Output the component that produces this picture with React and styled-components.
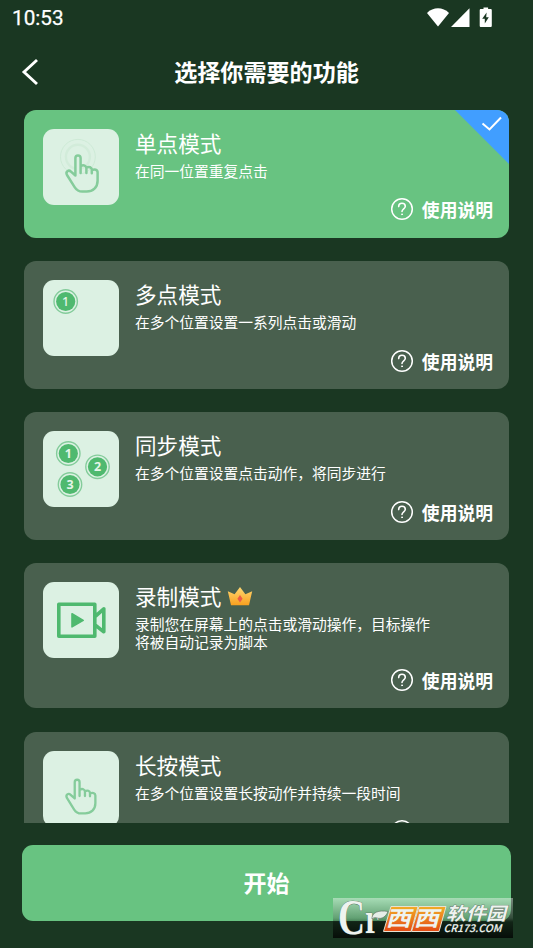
import React from 'react';
import styled, { createGlobalStyle } from 'styled-components';

const MODES = [
  { title: '单点模式', desc: '在同一位置重复点击', icon: 'tap', active: true },
  { title: '多点模式', desc: '在多个位置设置一系列点击或滑动', icon: 'multi' },
  { title: '同步模式', desc: '在多个位置设置点击动作，将同步进行', icon: 'sync' },
  { title: '录制模式', desc: '录制您在屏幕上的点击或滑动操作，目标操作将被自动记录为脚本', icon: 'record', vip: true },
  { title: '长按模式', desc: '在多个位置设置长按动作并持续一段时间', icon: 'press' },
];

const Hand = () => (
  <path
    d="M32.4 46.5V29a2.6 2.6 0 0 1 5.2 0V44M37.6 37.2c3-1.8 5.8-.6 5.8 2.2v4.6M43.4 38.8c2.6-1.6 5.4-.6 5.4 2v3.4M48.8 41.2c2.6-1.2 5.8-.6 5.8 2.2v8.4c0 6.6-4.6 10.8-11 10.8h-4.4c-3.600 0-5.600-1.400-7.400-4.200l-7.800-12.400c-1.800-3.400 1.600-5.600 4-3.400l4.400 3.900"
    fill="none"
    stroke="#85cc9b"
    strokeWidth="2.5"
    strokeLinecap="round"
    strokeLinejoin="round"
  />
);

const Point = ({ x, y, n, bold }) => (
  <g>
    <circle cx={x} cy={y} r="11.7" fill="none" stroke="#84cc9b" strokeWidth="1.4" />
    <circle cx={x} cy={y} r="9.6" fill="#4fb96f" />
    <PointText x={x} y={y + 4.4} $bold={bold}>{n}</PointText>
  </g>
);

const ModeIcon = ({ type }) => (
  <Tile viewBox="0 0 76 76">
    {type === 'tap' && (
      <>
        <circle cx="34.9" cy="27.8" r="17.4" fill="none" stroke="#cdead6" strokeWidth="1" />
        <circle cx="34.9" cy="27.8" r="12" fill="none" stroke="#d2ecda" strokeWidth="2.4" />
        <rect x="32.4" y="29" width="5.2" height="18" fill="#dcf1e3" />
        <Hand />
      </>
    )}
    {type === 'multi' && <Point x={22.7} y={21.5} n="1" />}
    {type === 'sync' && (
      <>
        <Point x={25.3} y={22.5} n="1" bold />
        <Point x={54.5} y={35.8} n="2" bold />
        <Point x={27} y={53.5} n="3" bold />
      </>
    )}
    {type === 'record' && (
      <>
        <path d="M15.8 22.2h36v32h-36zM52 34.6l8.8-7.8v23L52 42.8" fill="none" stroke="#4fb96f" strokeWidth="3.6" strokeLinejoin="round" />
        <path d="M29 31.8l11.2 6.6L29 44.8z" fill="#4fb96f" stroke="#4fb96f" strokeWidth="1.6" strokeLinejoin="round" />
      </>
    )}
    {type === 'press' && <g transform="translate(1.6 4.2) scale(.93)"><Hand /></g>}
  </Tile>
);

const Crown = () => (
  <svg width="26" height="20" viewBox="0 0 26 20">
    <defs>
      <linearGradient id="crown" x1="0" y1="0" x2="0" y2="1">
        <stop offset="0" stopColor="#ffd873" />
        <stop offset="1" stopColor="#f9a01f" />
      </linearGradient>
    </defs>
    <path d="M.8 5.2L7.6 8.2 13 1l5.4 7.2 6.8-3-3.2 14H4z" fill="url(#crown)" />
    <path d="M13 9l2.6 3.7L13 16.5l-2.600-3.800z" fill="#ed5a47" />
  </svg>
);

const Help = () => (
  <HelpRow>
    <svg width="24" height="24" viewBox="0 0 24 24" fill="none" stroke="#fff" strokeLinecap="round">
      <circle cx="12" cy="12" r="10.3" strokeWidth="1.5" />
      <path d="M8.7 9.6c0-2 1.4-3.3 3.3-3.3s3.3 1.2 3.3 3c0 2.5-3.3 2.5-3.3 5.200" strokeWidth="1.6" />
      <circle cx="12" cy="17.3" r=".5" fill="#fff" strokeWidth="1" />
    </svg>
    使用说明
  </HelpRow>
);

const Watermark = () => (
  <WatermarkBox>
    <svg width="180" height="40" viewBox="0 0 180 40" overflow="visible">
      <defs>
        <linearGradient id="stamp" x1="0" y1="0" x2="0" y2="1">
          <stop offset="0" stopColor="#f2ad27" />
          <stop offset="1" stopColor="#e44a14" />
        </linearGradient>
      </defs>
      <LogoText x="5" y="36" $size={50} $serif textLength="27" lengthAdjust="spacingAndGlyphs">C</LogoText>
      <LogoText x="32" y="34.5" $size={44} $serif textLength="14" lengthAdjust="spacingAndGlyphs">r</LogoText>
      <path d="M39 19.500c1-5 6-7.500 16-6-2 5-6 8-11 6.500-2-.8-3.500-.5-5 1z" fill="#e6eee8" stroke="#56685b" strokeWidth=".6" />
      <path d="M58 8.500h27L78 33.500H50.500zM86 8.500h27l-7 25H78.500z" fill="url(#stamp)" stroke="#e6e1d2" strokeWidth="1" />
      <g transform="skewX(-15)">
        <LogoText x="60.5" y="28.5" $size={21} $flat textLength="25" lengthAdjust="spacingAndGlyphs">西</LogoText>
        <LogoText x="88.5" y="28.5" $size={21} $flat textLength="25" lengthAdjust="spacingAndGlyphs">西</LogoText>
        <LogoText x="119" y="22.5" $size={18} textLength="60" lengthAdjust="spacingAndGlyphs">软件园</LogoText>
        <LogoText x="119.5" y="34" $size={10.5} $thin textLength="58" lengthAdjust="spacingAndGlyphs">CR173.COM</LogoText>
      </g>
    </svg>
  </WatermarkBox>
);

const App = () => {
  return (
    <Screen>
      <GlobalStyle />
      <StatusBar>
        <Clock>10:53</Clock>
        <svg width="68" height="22" viewBox="0 0 68 22" fill="#fff">
          <path d="M0 6C6.2-.2 15.8-.2 22 6L11 19.5z" />
          <path d="M42.500 1.300v18.700H24z" />
          <path d="M56.500 2V.6h4.600V2h2.400c.8 0 1.300.5 1.300 1.300v15.400c0 .8-.5 1.300-1.300 1.300H54c-.8 0-1.300-.5-1.300-1.300V3.300c0-.8.5-1.300 1.300-1.300z" />
          <path d="M59.600 5.500l-4.400 6.200h2.600v4.800l4-6.200h-2.600z" fill="#1a3722" />
        </svg>
      </StatusBar>

      <Header>
        <BackIcon viewBox="0 0 18 28">
          <path d="M16 2L3 14l13 12" fill="none" stroke="#fff" strokeWidth="2.9" />
        </BackIcon>
        <HeaderTitle>选择你需要的功能</HeaderTitle>
      </Header>

      <ModeList>
        {MODES.map((mode) => (
          <Card key={mode.title} $active={mode.active}>
            <ModeIcon type={mode.icon} />
            <CardBody>
              <CardTitle>{mode.title}{mode.vip && <Crown />}</CardTitle>
              <CardDesc>{mode.desc}</CardDesc>
              <Help />
            </CardBody>
            {mode.active && (
              <Corner viewBox="0 0 54 54">
                <path d="M0 0h54v54z" fill="#419eff" />
                <path d="M27.5 13.5l7 6 11.5-12" fill="none" stroke="#fff" strokeWidth="2" />
              </Corner>
            )}
          </Card>
        ))}
      </ModeList>

      <StartButton>开始</StartButton>
      <Watermark />
    </Screen>
  );
};

const GlobalStyle = createGlobalStyle`
  body {
    margin: 0;
    background: #1a3722;
  }
  * {
    box-sizing: border-box;
  }
`;

const Screen = styled.div`
  position: relative;
  display: flex;
  flex-direction: column;
  width: 533px;
  height: 948px;
  overflow: hidden;
  background: #1a3722;
  color: #fff;
  font-family: 'Noto Sans CJK SC', sans-serif;
`;

const StatusBar = styled.div`
  display: flex;
  align-items: center;
  justify-content: space-between;
  height: 36px;
  padding: 0 38px 0 12px;
`;

const Clock = styled.div`
  font-family: Roboto, sans-serif;
  font-size: 20.7px;
  font-weight: 400;
  -webkit-text-stroke: 0.25px #fff;
`;

const Header = styled.header`
  display: grid;
  grid-template-columns: 44px 1fr 44px;
  align-items: center;
  height: 74px;
  padding-bottom: 3px;
`;

const BackIcon = styled.svg`
  width: 18px;
  height: 28px;
  margin-left: 21px;
`;

const HeaderTitle = styled.h1`
  margin: 0 0 1px;
  font-size: 23.1px;
  font-weight: 700;
  line-height: 34px;
  text-align: center;
`;

const ModeList = styled.main`
  display: flex;
  flex-direction: column;
  gap: 23.6px;
  height: 713px;
  padding: 0 24px;
  overflow: hidden;
`;

const Card = styled.section`
  position: relative;
  display: flex;
  flex-shrink: 0;
  gap: 16.3px;
  padding: 19px 16px 15.1px 18.7px;
  border-radius: 12px;
  overflow: hidden;
  background: ${({ $active }) => ($active ? '#68c381' : '#49604e')};
`;

const Tile = styled.svg`
  flex-shrink: 0;
  width: 76px;
  height: 76px;
  border-radius: 11px;
  background: #dcf1e3;
`;

const PointText = styled.text`
  font-family: 'Noto Sans', sans-serif;
  font-size: 12.5px;
  font-weight: ${({ $bold }) => ($bold ? 700 : 500)};
  text-anchor: middle;
  fill: #e4f5e9;
`;

const CardBody = styled.div`
  display: flex;
  flex: 1;
  flex-direction: column;
  margin-top: -1px;
`;

const CardTitle = styled.h2`
  display: flex;
  align-items: center;
  gap: 6px;
  margin: 0;
  font-size: 21.6px;
  font-weight: 400;
  line-height: 30px;
`;

const CardDesc = styled.p`
  width: 300px;
  margin: 4px 0 17px;
  font-size: 14.75px;
  line-height: 17.4px;
`;

const HelpRow = styled.div`
  display: flex;
  align-items: center;
  align-self: flex-end;
  gap: 8px;
  height: 26px;
  margin-top: auto;
  font-size: 17.8px;
  font-weight: 700;
`;

const Corner = styled.svg`
  position: absolute;
  top: 0;
  right: 0;
  width: 54px;
  height: 54px;
`;

const StartButton = styled.button`
  height: 76px;
  margin: 22px 22px 0;
  padding: 0 0 2px;
  border: 0;
  border-radius: 11px;
  background: #68c381;
  color: #fff;
  font-family: inherit;
  font-size: 23px;
  font-weight: 700;
`;

const WatermarkBox = styled.div`
  position: absolute;
  left: 333px;
  top: 898px;
  width: 180px;
  height: 40px;
  background: linear-gradient(rgba(255, 255, 255, 0.42), rgba(90, 110, 95, 0.4) 50%, rgba(0, 0, 0, 0.35) 60%, rgba(0, 0, 0, 0.75));
`;

const LogoText = styled.text`
  font-family: ${({ $serif }) => ($serif ? "'Liberation Serif', serif" : "'Noto Sans CJK SC', sans-serif")};
  font-size: ${({ $size }) => $size}px;
  font-weight: ${({ $thin }) => ($thin ? 500 : 700)};
  fill: #eef3ef;
  stroke: ${({ $flat }) => ($flat ? 'none' : '#4d5c51')};
  stroke-width: 0.6px;
  paint-order: stroke;
`;

export default App;
